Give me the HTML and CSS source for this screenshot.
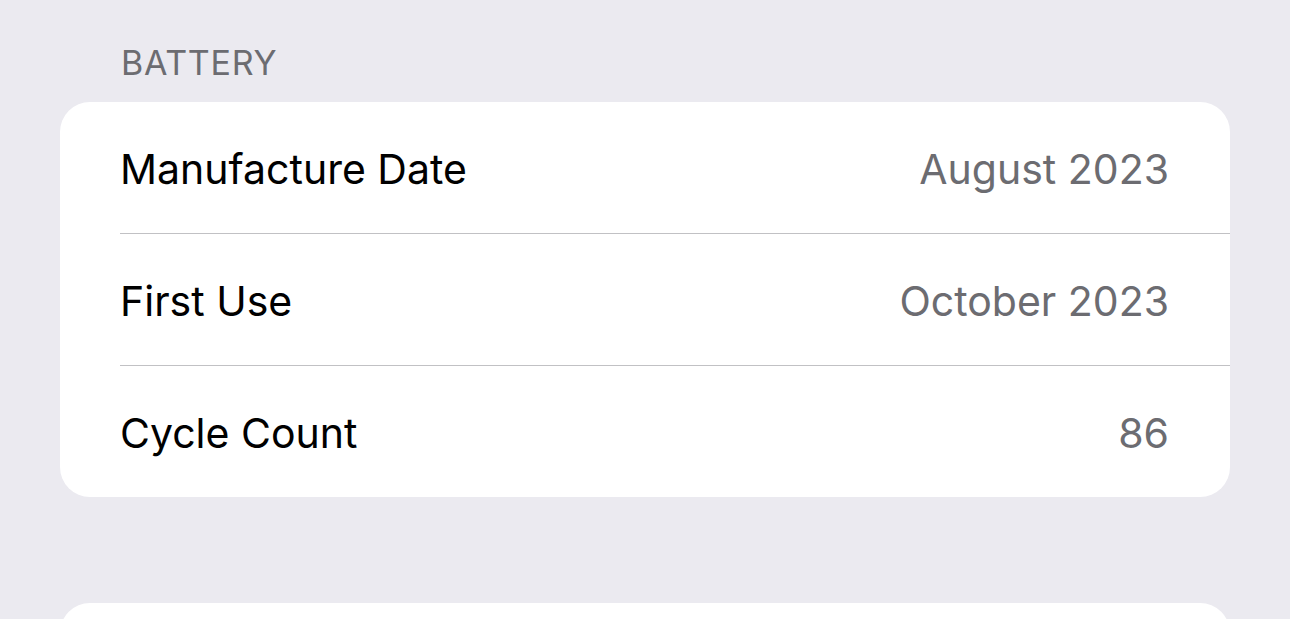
FILE: index.html
```html
<!DOCTYPE html>
<html lang="en">
<head>
    <meta charset="UTF-8">
    <meta name="viewport" content="width=device-width, initial-scale=1.0">
    <title>Battery</title>
    <link rel="stylesheet" href="styles.css">
</head>
<body>
    <div class="page">
        <h2 class="section-title">BATTERY</h2>
        <div class="group">
            <div class="row">
                <span class="label">Manufacture Date</span>
                <span class="value">August 2023</span>
            </div>
            <div class="row">
                <span class="label">First Use</span>
                <span class="value">October 2023</span>
            </div>
            <div class="row">
                <span class="label">Cycle Count</span>
                <span class="value">86</span>
            </div>
        </div>
        <div class="group group-next"></div>
    </div>
</body>
</html>
```

FILE: styles.css
```css
html, body {
    margin: 0;
    padding: 0;
}
body {
    font-family: Inter, 'Liberation Sans', sans-serif;
    background-color: #ebeaf0;
    -webkit-font-smoothing: antialiased;
}
.page {
    height: 619px;
    overflow: hidden;
    padding: 0 60px;
}
.section-title {
    margin: 0;
    padding: 43px 0 0 61px;
    height: 102px;
    box-sizing: border-box;
    font-size: 34px;
    font-weight: 400;
    line-height: 40px;
    color: #6c6c71;
    letter-spacing: 0.7px;
}
.group {
    background-color: white;
    border-radius: 30px;
    overflow: hidden;
}
.row {
    display: flex;
    justify-content: space-between;
    align-items: center;
    height: 132px;
    box-sizing: border-box;
    padding-top: 3px;
    margin-left: 60px;
    padding-right: 61px;
    border-bottom: 1px solid #c1c1c4;
    font-size: 41px;
}
.row:last-child {
    height: 131px;
    border-bottom: none;
}
.label {
    color: #000;
}
.value {
    color: #6c6c71;
}
.group-next {
    margin-top: 106px;
    height: 120px;
}
```
